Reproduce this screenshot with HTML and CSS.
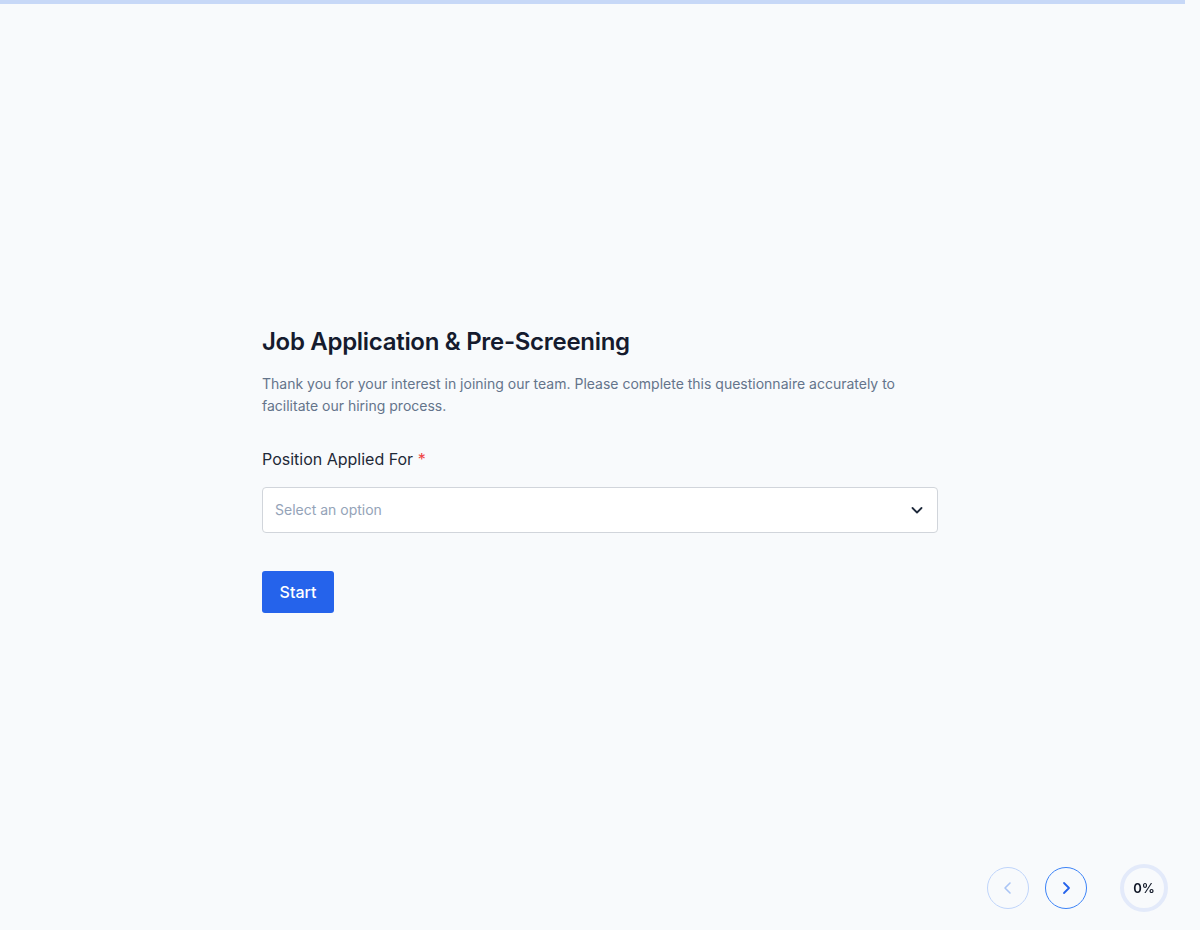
FILE: index.html
```html
<!DOCTYPE html>
<html lang="en">
<head>
    <meta charset="UTF-8">
    <meta name="viewport" content="width=device-width, initial-scale=1.0">
    <title>Job Application &amp; Pre-Screening</title>
    <link rel="stylesheet" href="styles.css">
</head>
<body>
    <div class="progress-track"><div class="progress-fill"></div></div>

    <main class="page">
        <div class="form-card">
            <h1 class="form-title">Job Application &amp; Pre-Screening</h1>
            <p class="form-desc">Thank you for your interest in joining our team. Please complete this questionnaire accurately to facilitate our hiring process.</p>

            <div class="field">
                <label class="field-label" for="position">Position Applied For <span class="required">*</span></label>
                <div class="select-wrap">
                    <select id="position" class="select">
                        <option value="" selected disabled>Select an option</option>
                        <option>Software Engineer</option>
                        <option>Product Designer</option>
                        <option>Customer Support</option>
                    </select>
                    <svg class="select-arrow" width="16" height="16" viewBox="0 0 16 16" fill="none">
                        <path d="M3.5 6l4.5 4.5L12.5 6" stroke="#1e293b" stroke-width="1.8" stroke-linecap="round" stroke-linejoin="round"/>
                    </svg>
                </div>
            </div>

            <button class="start-btn" type="button">Start</button>
        </div>
    </main>

    <div class="nav-bar">
        <button class="nav-btn" type="button" disabled>
            <svg width="20" height="20" viewBox="0 0 20 20" fill="none">
                <path d="M12 5l-5 5 5 5" stroke="currentColor" stroke-width="1.6" stroke-linecap="round" stroke-linejoin="round"/>
            </svg>
        </button>
        <button class="nav-btn active" type="button">
            <svg width="20" height="20" viewBox="0 0 20 20" fill="none">
                <path d="M8 5l5 5-5 5" stroke="currentColor" stroke-width="1.8" stroke-linecap="round" stroke-linejoin="round"/>
            </svg>
        </button>
        <div class="percent">0%</div>
    </div>
</body>
</html>
```

FILE: styles.css
```css
* {
    box-sizing: border-box;
}
body {
    margin: 0;
    font-family: Inter, "Noto Sans", Arial, sans-serif;
    background-color: #f8fafc;
    color: #111827;
}
.progress-track {
    position: fixed;
    top: 0;
    left: 0;
    width: calc(100% - 15px);
    height: 4px;
    background-color: #c7d8f7;
}
.progress-fill {
    width: 0;
    height: 100%;
    background-color: #2563eb;
}
.page {
    min-height: 100vh;
    display: flex;
    align-items: center;
    justify-content: center;
    padding-top: 8px;
}
.form-card {
    width: 676px;
}
.form-title {
    margin: 0 0 15px;
    font-size: 24px;
    line-height: 32px;
    font-weight: 600;
    color: #151b2e;
    letter-spacing: -0.3px;
}
.form-desc {
    margin: 0 0 30px;
    font-size: 14px;
    line-height: 22px;
    color: #64748b;
}
.field-label {
    display: block;
    margin-bottom: 16px;
    font-size: 16px;
    line-height: 24px;
    color: #1f2937;
}
.required {
    color: #ef4444;
}
.select-wrap {
    position: relative;
}
.select {
    width: 100%;
    height: 46px;
    padding: 0 40px 0 12px;
    border: 1px solid #d1d5db;
    border-radius: 4px;
    background-color: #fff;
    font-family: inherit;
    font-size: 14px;
    color: #94a3b8;
    appearance: none;
    -webkit-appearance: none;
    outline: none;
}
.select-arrow {
    position: absolute;
    right: 13px;
    top: 15px;
    pointer-events: none;
}
.start-btn {
    margin-top: 38px;
    width: 72px;
    height: 42px;
    border: none;
    border-radius: 3px;
    background-color: #2563eb;
    color: #fff;
    font-family: inherit;
    font-size: 16px;
    font-weight: 500;
    cursor: pointer;
}
.nav-bar {
    position: fixed;
    right: 32px;
    bottom: 18px;
    display: flex;
    align-items: center;
}
.nav-btn {
    width: 42px;
    height: 42px;
    margin-right: 16px;
    border: 1px solid #3b82f6;
    border-radius: 50%;
    background: transparent;
    color: #2563eb;
    display: flex;
    align-items: center;
    justify-content: center;
    padding: 0;
    cursor: pointer;
}
.nav-btn:disabled {
    border-color: #bfd4fa;
    color: #a9c4f5;
    cursor: default;
}
.nav-btn.active {
    margin-right: 33px;
}
.percent {
    width: 48px;
    height: 48px;
    border: 4px solid #e3eafa;
    border-radius: 50%;
    display: flex;
    align-items: center;
    justify-content: center;
    font-size: 13px;
    font-weight: 600;
    color: #111827;
}
```
